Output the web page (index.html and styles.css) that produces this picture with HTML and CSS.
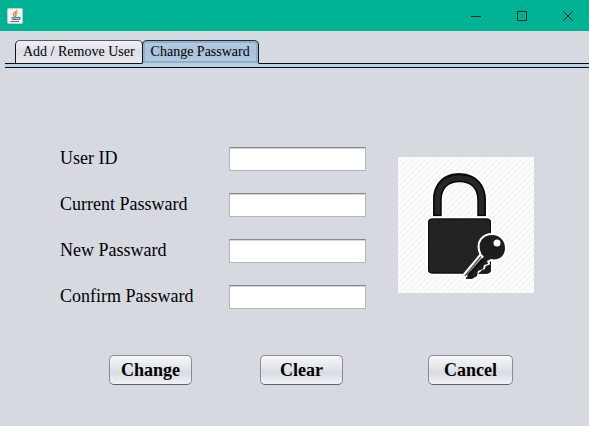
FILE: index.html
```html
<!DOCTYPE html>
<html lang="en">
<head>
<meta charset="utf-8">
<title>Change Passward</title>
<link rel="stylesheet" href="styles.css">
</head>
<body>
<header class="titlebar">
  <svg class="app-icon" viewBox="0 0 16 16" aria-hidden="true">
    <rect x="0.5" y="0.5" width="15" height="15" rx="1" fill="#f3f3f1" stroke="#b9cfca"/>
    <path d="M9.500 2C10 4 6 4.500 6.500 6.500C6.700 7.500 7.500 8 7.500 9M10.500 4.500C8 5.500 8.500 6.500 9 7.300C9.200 8 8.500 8.500 8.300 9" fill="none" stroke="#e0803c" stroke-width="1.400"/>
    <path d="M4.500 9.800H11M5 11.500H10.500M3.500 13.500H12M11 9.500C14 9 13.500 11.500 11 11.800" fill="none" stroke="#4f7093" stroke-width="1.200"/>
  </svg>
  <div class="window-controls">
    <button class="control" type="button" aria-label="Minimize"><svg viewBox="0 0 10 10"><path d="M0 5.500H10"/></svg></button>
    <button class="control" type="button" aria-label="Maximize"><svg viewBox="0 0 10 10"><path d="M.5 .5H9.500V9.500H.5Z"/></svg></button>
    <button class="control" type="button" aria-label="Close"><svg viewBox="0 0 10 10"><path d="M0 0L10 10M10 0L0 10"/></svg></button>
  </div>
</header>
<nav class="tabs" role="tablist">
  <button class="tab" type="button" role="tab" aria-selected="false">Add / Remove User</button>
  <button class="tab selected" type="button" role="tab" aria-selected="true">Change Passward</button>
</nav>
<main>
  <form>
    <div class="content">
      <div class="fields">
        <label for="user">User ID</label><input id="user" type="text">
        <label for="current">Current Passward</label><input id="current" type="password">
        <label for="new">New Passward</label><input id="new" type="password">
        <label for="confirm">Confirm Passward</label><input id="confirm" type="password">
      </div>
      <svg class="lock" viewBox="0 0 136 136" role="img" aria-label="Padlock and key">
        <defs>
          <pattern id="hatch" width="6" height="6" patternUnits="userSpaceOnUse">
            <path d="M-1 1L1 -1M0 6L6 0M5 7L7 5" stroke="#f1f1f1" stroke-width="1.200"/>
          </pattern>
        </defs>
        <rect width="136" height="136" fill="#fcfcfc"/>
        <rect width="136" height="136" fill="url(#hatch)"/>
        <path d="M35 59V43C35 27 45 16 61 16S88 27 88 43V59H80V43C80 31 73 24 61 24S43 31 43 43V59Z" fill="#222" stroke="#fff" stroke-width="4" paint-order="stroke"/>
        <path d="M36 58.500V43C36 27 46 17.500 61.500 17.500S87 27 87 43V58.500H80V43C80 31 73 24.500 61.500 24.500S43 31 43 43V58.500Z" fill="#262626" stroke="#080808" stroke-width="1.500"/>
        <rect x="30" y="61.500" width="63" height="55" rx="4" fill="#222" stroke="#fff" stroke-width="4" paint-order="stroke"/>
        <rect x="30.500" y="62" width="62" height="54" rx="3.500" fill="#222" stroke="#0b0b0b"/>
        <path d="M82 93C80 84 86 78 94 78C102 78 107 84 107 91C107 99 101 104 93 102L89 104L90 107L86 108L85 112L80 114L79 119L74 122L68 122V117L84 99Z" fill="#1d1d1d" stroke="#fff" stroke-width="4" paint-order="stroke"/>
        <path d="M66.500 119L84 98" stroke="#fff" stroke-width="5"/>
        <path d="M67 119L83 99.500" stroke="#555" stroke-width="1.500"/>
        <path d="M70 119L85 102" stroke="#111" stroke-width="3"/>
        <path d="M80 117L84 113L87 112L88 109L93 107V112Q93 116 89 116.500Z" fill="#1d1d1d"/>
        <circle cx="99" cy="86" r="3.500" fill="#fff"/>
      </svg>
    </div>
    <div class="actions">
      <button class="action" type="button">Change</button>
      <button class="action" type="reset">Clear</button>
      <button class="action wide" type="button">Cancel</button>
    </div>
  </form>
</main>
</body>
</html>
```
FILE: styles.css
```css
* {
  box-sizing: border-box;
}

body {
  margin: 0;
  background: #d6d9e0;
  color: #000;
  font-family: "Liberation Serif", "Times New Roman", serif;
}

button {
  font-family: inherit;
  color: inherit;
}

.titlebar {
  display: flex;
  align-items: center;
  justify-content: space-between;
  height: 31px;
  padding-left: 7px;
  background: #00b294;
}

.app-icon {
  width: 16px;
  height: 16px;
}

.window-controls {
  display: flex;
  gap: 4px;
}

.control {
  display: flex;
  align-items: center;
  justify-content: center;
  width: 42px;
  height: 30px;
  padding: 0;
  border: 0;
  background: none;
}

.control svg {
  width: 10px;
  height: 10px;
  fill: none;
  stroke: #06231e;
}

.tabs {
  display: flex;
  height: 37px;
  margin-left: 5px;
  padding: 9px 0 0 10px;
  border-bottom: 1px solid #04091c;
  background: linear-gradient(#04091c, #04091c) 0 32px / 100% 1px no-repeat,
    linear-gradient(#bccfdf, #bccfdf) 0 33px / 100% 3px no-repeat;
}

.tab {
  height: 24px;
  padding: 0 7px;
  border: 1px solid #10131f;
  border-top-color: #555a64;
  border-radius: 5px 5px 0 0;
  background: linear-gradient(#f0f1f5, #dcdfe5 50%, #e8eaf0);
  font-size: 14px;
  line-height: 22px;
}

.tab.selected {
  margin-left: -1px;
  padding: 0 8px;
  border-top-color: #18304d;
  border-bottom-color: #bccfdf;
  background: linear-gradient(#b8cbdf, #a9c2d9 50%, #b4cce0);
  box-shadow: inset 0 0 0 2px #8fb0cd;
}

.content {
  display: flex;
  align-items: flex-start;
  gap: 32px;
  padding: 79px 55px 0 60px;
}

.fields {
  display: grid;
  flex: 1;
  grid-template-columns: 169px 1fr;
  row-gap: 22px;
  align-items: center;
  font-size: 18px;
}

.fields label {
  padding-bottom: 2px;
}

.fields input {
  width: 100%;
  min-width: 0;
  height: 24px;
  padding: 0 6px;
  border: 1px solid #b4b6bb;
  border-top-color: #85878b;
  border-radius: 0;
  background: #fff;
  box-shadow: inset 0 1px 0 #d4d5d8;
  font: inherit;
}

.lock {
  width: 136px;
  height: 136px;
  margin-top: 10px;
}

.actions {
  display: grid;
  grid-template-columns: 151fr 168fr 85fr;
  justify-items: start;
  padding: 46px 76px 0 109px;
}

.action {
  width: 83px;
  height: 30px;
  padding: 0;
  border: 1px solid #898c93;
  border-bottom-color: #5d6067;
  border-radius: 5px;
  background: linear-gradient(#f6f7f9, #dfe2e8 50%, #d9dce3 60%, #f0f2f6);
  font-size: 18px;
  font-weight: bold;
}

.action.wide {
  width: 85px;
}
```
